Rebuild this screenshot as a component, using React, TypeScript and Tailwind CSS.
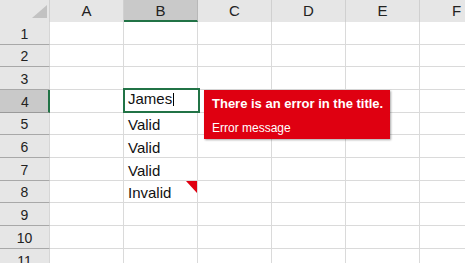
type Cell = { text?: string; error?: boolean };

const columns = ["A", "B", "C", "D", "E", "F"];
const rowHeights = ["h-[23px]", "h-[22px]", "h-[23px]", "h-[23px]", "h-[22px]", "h-[23px]", "h-[23px]", "h-[22px]", "h-[23px]", "h-[23px]", "h-[23px]"];

const bColumn: Record<number, Cell> = {
  5: { text: "Valid" },
  6: { text: "Valid" },
  7: { text: "Valid" },
  8: { text: "Invalid", error: true },
};

function ColumnHeader({ label, selected }: { label: string; selected: boolean }) {
  return (
    <div
      className={`flex h-full w-[74px] shrink-0 items-center justify-center border-r text-[15px] text-[#222] ${
        selected ? "border-[#b8b8b8] border-b-2 border-b-[#217346] bg-[#c9c9c9] pt-[2px]" : "border-[#d0d0d0] bg-[#e6e6e6]"
      }`}
    >
      {label}
    </div>
  );
}

function RowHeader({ n, selected }: { n: number; selected: boolean }) {
  return (
    <div
      className={`flex h-full w-[50px] shrink-0 items-center justify-center border-b pt-[2px] text-[14px] text-[#222] ${
        selected ? "border-b-[#9a9a9a] border-r-2 border-r-[#217346] bg-[#c9c9c9] pl-[2px]" : "border-b-[#a8a8a8] border-r border-r-[#d6d6d6] bg-[#e6e6e6]"
      }`}
    >
      {n}
    </div>
  );
}

function GridCell({ cell }: { cell?: Cell }) {
  return (
    <div className="relative flex h-full w-[74px] shrink-0 items-end border-r border-b border-[#dadada] px-[4px] text-[15px] leading-[18px] text-[#111]">
      {cell?.text}
      {cell?.error && (
        <svg className="absolute right-[0px] top-[0px]" width="11" height="12" viewBox="0 0 11 12">
          <polygon points="0,0 11,0 11,12" fill="#e00010" />
        </svg>
      )}
    </div>
  );
}

export default function App() {
  return (
    <div className="relative h-[263px] w-[465px] overflow-hidden bg-white font-['Liberation_Sans',Arial,sans-serif]">
      <div className="flex h-[22px]">
        <div className="relative h-full w-[50px] shrink-0 border-r border-[#d0d0d0] bg-[#e6e6e6]">
          <svg className="absolute left-[32px] top-[5px]" width="15" height="13" viewBox="0 0 15 13">
            <polygon points="15,0 15,13 0,13" fill="#c2c2c2" />
          </svg>
        </div>
        {columns.map((c) => (
          <ColumnHeader key={c} label={c} selected={c === "B"} />
        ))}
      </div>

      {rowHeights.map((h, i) => {
        const n = i + 1;
        return (
          <div key={n} className={`flex ${h}`}>
            <RowHeader n={n} selected={n === 4} />
            {columns.map((c) => (
              <GridCell key={c} cell={c === "B" ? bColumn[n] : undefined} />
            ))}
          </div>
        );
      })}

      {/* active cell in edit mode */}
      <div className="absolute left-[123px] top-[88px] flex h-[25px] w-[77px] items-end border-2 border-[#217346] bg-white pb-[3px] pl-[3px] text-[15px] leading-[18px] text-[#111]">
        <span>James</span>
        <span className="mb-[2px] ml-[1px] inline-block h-[13px] w-[1px] bg-black" />
      </div>

      {/* validation error tooltip */}
      <div className="absolute left-[204px] top-[90px] h-[49px] w-[186px] whitespace-nowrap bg-[#df0011] pl-[8px] pt-[6px] text-white shadow-[1px_1px_2px_rgba(0,0,0,0.35)]">
        <div className="text-[13px] font-bold leading-[16px]">There is an error in the title.</div>
        <div className="mt-[8px] text-[12px] leading-[16px]">Error message</div>
      </div>
    </div>
  );
}
